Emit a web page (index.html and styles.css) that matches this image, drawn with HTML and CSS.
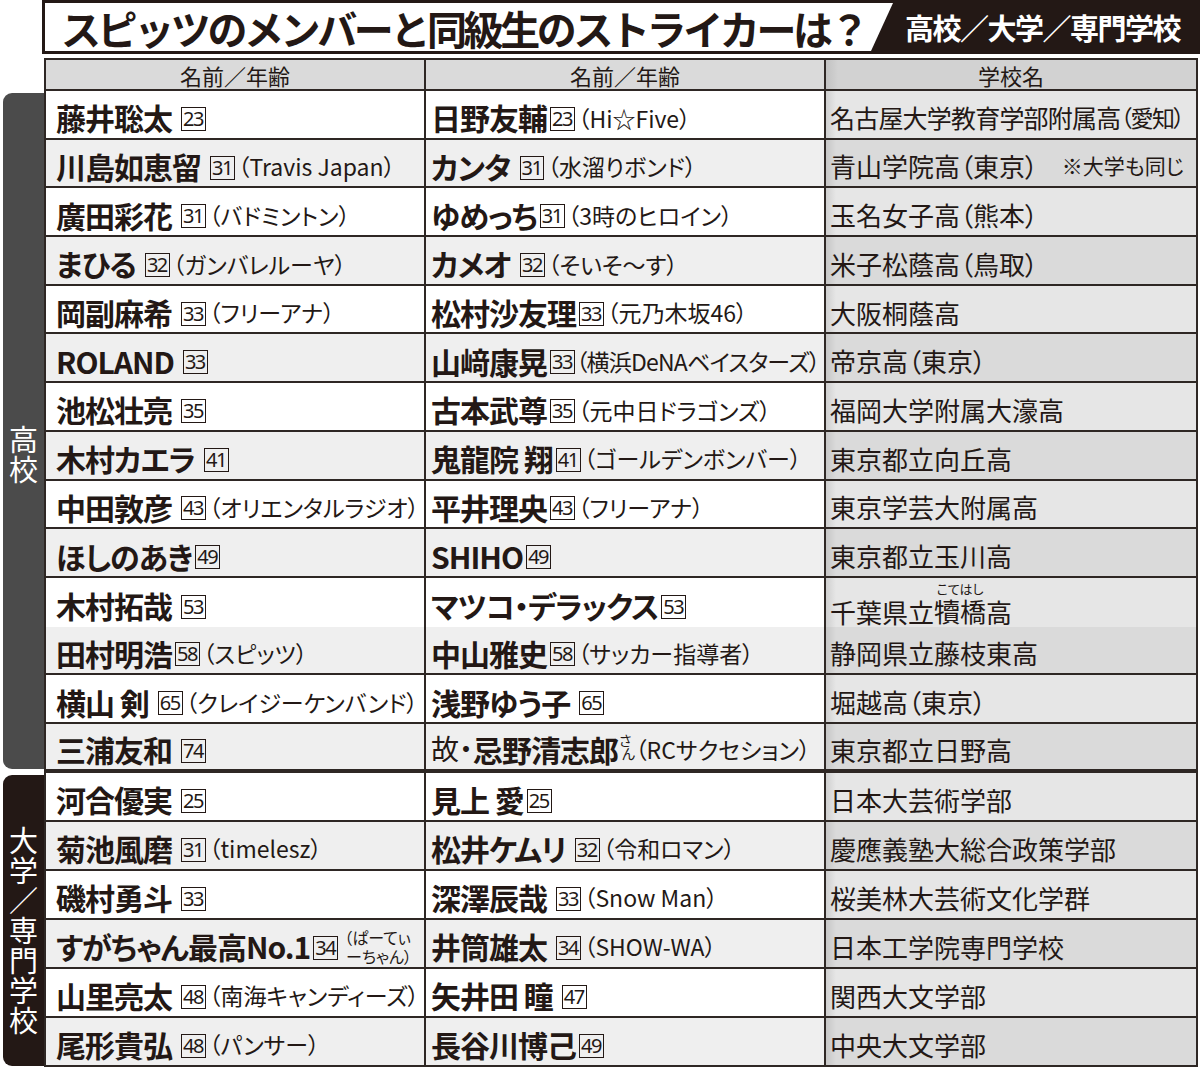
FILE: index.html
```html
<!DOCTYPE html>
<html lang="ja">
<head>
<meta charset="utf-8">
<title>スピッツのメンバーと同級生のストライカーは？</title>
<link rel="stylesheet" href="styles.css">
</head>
<body>
<div class="page">
  <header class="title-bar">
    <div class="title-box"><h1 class="title">スピッツのメンバーと同級生のストライカーは？</h1></div>
    <div class="title-sub">高校／大学／専門学校</div>
  </header>

  <div class="thead">
    <div class="th">名前／年齢</div>
    <div class="th">名前／年齢</div>
    <div class="th th-sch">学校名</div>
  </div>

  <section class="group group-hs">
    <div class="label label-hs"><span>高</span><span>校</span></div>
    <div class="rows">
      <div class="row">
        <div class="c c1"><span class="nm">藤井聡太</span><span class="age">23</span></div>
        <div class="c c2"><span class="nm">日野友輔</span><span class="age t">23</span><span class="note">（Hi☆Five）</span></div>
        <div class="c c3 c3-tight">名古屋大学教育学部附属高<span class="sq">（愛知）</span></div>
      </div>
      <div class="row">
        <div class="c c1"><span class="nm">川島如恵留</span><span class="age">31</span><span class="note">（Travis Japan）</span></div>
        <div class="c c2"><span class="nm">カンタ</span><span class="age">31</span><span class="note">（水溜りボンド）</span></div>
        <div class="c c3">青山学院高（東京）<span class="aside">※大学も同じ</span></div>
      </div>
      <div class="row">
        <div class="c c1"><span class="nm">廣田彩花</span><span class="age">31</span><span class="note">（バドミントン）</span></div>
        <div class="c c2"><span class="nm">ゆめっち</span><span class="age t">31</span><span class="note">（3時のヒロイン）</span></div>
        <div class="c c3">玉名女子高（熊本）</div>
      </div>
      <div class="row">
        <div class="c c1"><span class="nm">まひる</span><span class="age">32</span><span class="note">（ガンバレルーヤ）</span></div>
        <div class="c c2"><span class="nm">カメオ</span><span class="age">32</span><span class="note">（そいそ〜す）</span></div>
        <div class="c c3">米子松蔭高（鳥取）</div>
      </div>
      <div class="row">
        <div class="c c1"><span class="nm">岡副麻希</span><span class="age">33</span><span class="note">（フリーアナ）</span></div>
        <div class="c c2"><span class="nm">松村沙友理</span><span class="age t">33</span><span class="note">（元乃木坂46）</span></div>
        <div class="c c3">大阪桐蔭高</div>
      </div>
      <div class="row">
        <div class="c c1"><span class="nm">ROLAND</span><span class="age">33</span></div>
        <div class="c c2"><span class="nm">山﨑康晃</span><span class="age t">33</span><span class="note n-tight">（横浜DeNAベイスターズ）</span></div>
        <div class="c c3">帝京高（東京）</div>
      </div>
      <div class="row">
        <div class="c c1"><span class="nm">池松壮亮</span><span class="age">35</span></div>
        <div class="c c2"><span class="nm">古本武尊</span><span class="age t">35</span><span class="note">（元中日ドラゴンズ）</span></div>
        <div class="c c3">福岡大学附属大濠高</div>
      </div>
      <div class="row">
        <div class="c c1"><span class="nm">木村カエラ</span><span class="age">41</span></div>
        <div class="c c2"><span class="nm">鬼龍院 翔</span><span class="age t">41</span><span class="note">（ゴールデンボンバー）</span></div>
        <div class="c c3">東京都立向丘高</div>
      </div>
      <div class="row">
        <div class="c c1"><span class="nm">中田敦彦</span><span class="age">43</span><span class="note">（オリエンタルラジオ）</span></div>
        <div class="c c2"><span class="nm">平井理央</span><span class="age t">43</span><span class="note">（フリーアナ）</span></div>
        <div class="c c3">東京学芸大附属高</div>
      </div>
      <div class="row">
        <div class="c c1"><span class="nm">ほしのあき</span><span class="age t">49</span></div>
        <div class="c c2"><span class="nm">SHIHO</span><span class="age t">49</span></div>
        <div class="c c3">東京都立玉川高</div>
      </div>
      <div class="row">
        <div class="c c1"><span class="nm">木村拓哉</span><span class="age">53</span></div>
        <div class="c c2"><span class="nm">マツコ・デラックス</span><span class="age t">53</span></div>
        <div class="c c3 c3-ruby">千葉県立<span class="rb">犢橋<span class="rt">こてはし</span></span>高</div>
      </div>
      <div class="row">
        <div class="c c1"><span class="nm">田村明浩</span><span class="age t">58</span><span class="note">（スピッツ）</span></div>
        <div class="c c2"><span class="nm">中山雅史</span><span class="age t">58</span><span class="note">（サッカー指導者）</span></div>
        <div class="c c3">静岡県立藤枝東高</div>
      </div>
      <div class="row">
        <div class="c c1"><span class="nm">横山 剣</span><span class="age">65</span><span class="note">（クレイジーケンバンド）</span></div>
        <div class="c c2"><span class="nm">浅野ゆう子</span><span class="age">65</span></div>
        <div class="c c3">堀越高（東京）</div>
      </div>
      <div class="row row-last">
        <div class="c c1"><span class="nm">三浦友和</span><span class="age">74</span></div>
        <div class="c c2"><span class="pre">故・</span><span class="nm">忌野清志郎</span><span class="san"><span>さ</span><span>ん</span></span><span class="note n-close">（RCサクセション）</span></div>
        <div class="c c3">東京都立日野高</div>
      </div>
    </div>
  </section>

  <section class="group group-uni">
    <div class="label label-uni"><span>大</span><span>学</span><span>／</span><span>専</span><span>門</span><span>学</span><span>校</span></div>
    <div class="rows">
      <div class="row">
        <div class="c c1"><span class="nm">河合優実</span><span class="age">25</span></div>
        <div class="c c2"><span class="nm">見上 愛</span><span class="age t">25</span></div>
        <div class="c c3">日本大芸術学部</div>
      </div>
      <div class="row">
        <div class="c c1"><span class="nm">菊池風磨</span><span class="age">31</span><span class="note">（timelesz）</span></div>
        <div class="c c2"><span class="nm">松井ケムリ</span><span class="age">32</span><span class="note">（令和ロマン）</span></div>
        <div class="c c3">慶應義塾大総合政策学部</div>
      </div>
      <div class="row">
        <div class="c c1"><span class="nm">磯村勇斗</span><span class="age">33</span></div>
        <div class="c c2"><span class="nm">深澤辰哉</span><span class="age">33</span><span class="note">（Snow Man）</span></div>
        <div class="c c3">桜美林大芸術文化学群</div>
      </div>
      <div class="row">
        <div class="c c1"><span class="nm">すがちゃん最高No.1</span><span class="age t">34</span><span class="note2"><span class="l1">（ぱーてぃ</span><span class="l2">ーちゃん）</span></span></div>
        <div class="c c2"><span class="nm">井筒雄太</span><span class="age">34</span><span class="note">（SHOW-WA）</span></div>
        <div class="c c3">日本工学院専門学校</div>
      </div>
      <div class="row">
        <div class="c c1"><span class="nm">山里亮太</span><span class="age">48</span><span class="note">（南海キャンディーズ）</span></div>
        <div class="c c2"><span class="nm">矢井田 瞳</span><span class="age">47</span></div>
        <div class="c c3">関西大文学部</div>
      </div>
      <div class="row">
        <div class="c c1"><span class="nm">尾形貴弘</span><span class="age">48</span><span class="note">（パンサー）</span></div>
        <div class="c c2"><span class="nm">長谷川博己</span><span class="age t">49</span></div>
        <div class="c c3">中央大文学部</div>
      </div>
    </div>
  </section>
</div>
</body>
</html>
```
FILE: styles.css
```css
* { box-sizing: border-box; margin: 0; padding: 0; }

body {
  margin: 0;
  width: 1200px;
  height: 1069px;
  overflow: hidden;
  background: #ffffff;
  color: #231815;
  font-family: "Noto Sans CJK JP", "Noto Sans", sans-serif;
  font-feature-settings: "palt";
}

.page { width: 1200px; height: 1069px; }

/* ---------- title ---------- */
.title-bar {
  margin-left: 42px;
  height: 54px;
  background: #231815;
  display: flex;
}
.title-box {
  width: 848px;
  margin: 3px 0 3px 3px;
  background: #ffffff;
  clip-path: polygon(0 0, 100% 0, calc(100% - 22px) 100%, 0 100%);
  display: flex;
  align-items: center;
  padding-left: 16px;
}
.title {
  font-size: 40px;
  font-weight: 700;
  line-height: 1.2;
  letter-spacing: -3.4px;
  white-space: nowrap;
  font-feature-settings: normal;
  margin-top: 2px;
}
.title-sub {
  flex: 1;
  display: flex;
  align-items: center;
  justify-content: center;
  padding-right: 8px;
  color: #ffffff;
  font-size: 29px;
  font-weight: 700;
  line-height: 1.2;
  letter-spacing: -1.5px;
  white-space: nowrap;
  font-feature-settings: normal;
}

/* ---------- header row ---------- */
.thead {
  margin: 4px 2px 0 44px;
  height: 33px;
  display: grid;
  grid-template-columns: 378px 400px 372px;
  border: 2px solid #2e2724;
}
.th {
  display: flex;
  align-items: center;
  justify-content: center;
  background: #dadada;
  font-size: 22px;
  line-height: 1.2;
  padding-top: 1px;
  font-feature-settings: normal;
}
.th + .th { border-left: 2px solid #2e2724; }
.th-sch { background: linear-gradient(to right, #c2c2c2, #d2d2d2 12px); }

/* ---------- groups ---------- */
.group {
  display: grid;
  grid-template-columns: 41px 1154px;
  margin-left: 3px;
}
.label {
  display: flex;
  flex-direction: column;
  align-items: center;
  justify-content: center;
  border-radius: 9px 0 0 9px;
  color: #ffffff;
  font-size: 29px;
  line-height: 30px;
  font-feature-settings: normal;
}
.label span { display: block; height: 30px; }
.label-hs {
  background: #4b4b4b;
  margin: 2px 0 4px;
  padding-top: 44px;
}
.label-uni {
  background: #231815;
  margin: 2px 0 1px;
  padding-top: 18px;
}

.rows {
  border-left: 2px solid #2e2724;
  border-right: 2px solid #2e2724;
}
.row {
  display: grid;
  grid-template-columns: 378px 400px 372px;
  height: 48.7px;
  border-bottom: 2px solid #2e2724;
}
.group-uni .row { height: 49px; }
.row-last { border-bottom-width: 4px; }

.c {
  display: flex;
  align-items: center;
  padding-top: 6px;
  white-space: nowrap;
  line-height: 1.2;
  min-width: 0;
}
.c1 { padding-left: 10px; }
.c2 { padding-left: 5px; border-left: 2px solid #2e2724; }
.c3 {
  padding-left: 4px;
  border-left: 2px solid #2e2724;
  font-size: 26px;
}

.row:nth-child(odd) .c1, .row:nth-child(odd) .c2 { background: #ffffff; }
.row:nth-child(even) .c1, .row:nth-child(even) .c2 { background: #efefef; }
.row:nth-child(odd) .c3 { background: linear-gradient(to right, #cfcfcf, #e6e6e6 10px); }
.row:nth-child(even) .c3 { background: linear-gradient(to right, #c6c6c6, #dadada 10px); }

/* ---------- cell parts ---------- */
.nm {
  font-size: 30px;
  font-weight: 700;
  letter-spacing: -1px;
  line-height: 1.2;
}
.age {
  display: inline-flex;
  align-items: center;
  justify-content: center;
  height: 24px;
  min-width: 23px;
  margin-left: 9px;
  margin-top: 3px;
  padding: 0 2px 0 1px;
  border: 1.5px solid #231815;
  font-family: "Noto Sans", sans-serif;
  font-size: 20px;
  line-height: 1;
  letter-spacing: -1.5px;
}
.age.t { margin-left: 3px; }
.note {
  font-size: 23px;
  margin-left: 3px;
  margin-top: 2px;
}
.n-tight { letter-spacing: -0.8px; margin-left: 1px; }
.n-close { margin-left: 0; }

.pre { font-size: 28px; }
.san {
  display: inline-flex;
  flex-direction: column;
  font-size: 14px;
  line-height: 13px;
  margin-left: 1px;
  margin-top: -4px;
}
.san span:last-child { padding-left: 3px; }

.note2 {
  display: inline-flex;
  flex-direction: column;
  font-size: 16px;
  line-height: 19px;
  margin-left: 6px;
  margin-top: 2px;
}
.note2 .l2 { padding-left: 2px; }

.c3-tight { letter-spacing: -0.8px; font-size: 25px; }
.sq { font-size: 23px; letter-spacing: -1.5px; }
.aside { font-size: 21px; margin-left: auto; margin-right: 12px; }

.c3-ruby { padding-top: 18px; }
.rb {
  position: relative;
  display: inline-block;
  line-height: 26px;
}
.rt {
  position: absolute;
  left: -4px;
  right: -4px;
  bottom: 100%;
  margin-bottom: 3px;
  text-align: center;
  font-size: 13px;
  line-height: 13px;
}
```
